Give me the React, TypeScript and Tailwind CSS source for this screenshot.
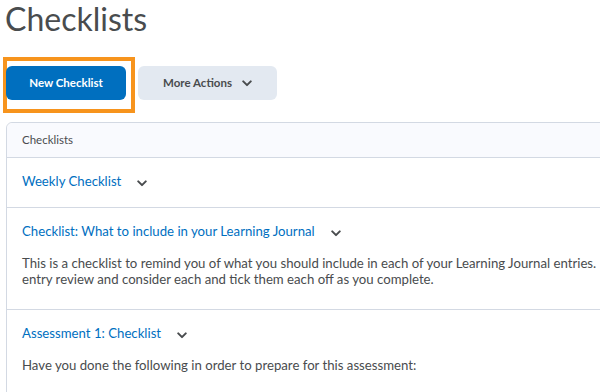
import React from 'react';

function Chevron({ className = '' }: { className?: string }) {
  return (
    <svg viewBox="0 0 12 8" className={className} aria-hidden="true">
      <path d="M1.5 1.5 L6 6 L10.5 1.5" fill="none" stroke="currentColor" strokeWidth="2.4" strokeLinecap="round" strokeLinejoin="round" />
    </svg>
  );
}

type Item = { title: string; lines: string[] };

const ITEMS: Item[] = [
  { title: 'Weekly Checklist', lines: [] },
  {
    title: 'Checklist: What to include in your Learning Journal',
    lines: [
      'This is a checklist to remind you of what you should include in each of your Learning Journal entries.',
      'entry review and consider each and tick them each off as you complete.',
    ],
  },
  {
    title: 'Assessment 1: Checklist',
    lines: ['Have you done the following in order to prepare for this assessment:'],
  },
];

export default function App() {
  return (
    <div className="relative w-[600px] h-[392px] overflow-hidden bg-white font-['Lato','Noto_Sans',sans-serif] text-[#494c4e]">
      <h1 className="pl-[5px] text-[32px] leading-[38px] font-normal text-[#494c4e]">Checklists</h1>

      <div className="relative flex gap-3 pl-[6px] mt-[28px]">
        <div className="absolute left-[3px] top-[-9px] w-[132px] h-[56px] border-4 border-[#f7941d]" />
        <button
          type="button"
          className="relative h-[34px] w-[120px] rounded-md bg-[#006fbf] text-white text-[11.5px] font-bold"
        >
          New Checklist
        </button>
        <button
          type="button"
          className="h-[34px] w-[139px] rounded-md bg-[#e3e9f1] text-[#494c4e] text-[11.5px] font-bold flex items-center justify-center gap-[10px]"
        >
          More Actions
          <Chevron className="w-[10px] h-[7px] text-[#494c4e]" />
        </button>
      </div>

      <div className="ml-[6px] mt-[22px] w-[760px] border border-[#d3d9e3] rounded-tl-md">
        <div className="h-[34px] flex items-center pl-[15px] bg-[#f9fafe] text-[11.5px] text-[#494c4e] rounded-tl-md">
          Checklists
        </div>
        {ITEMS.map((item) => (
          <div key={item.title} className="border-t border-[#d3d9e3] pl-[15px] pt-[14px] pb-[15px]">
            <div className="flex items-center gap-[16px] h-[20px]">
              <span className="text-[13.2px] text-[#006fbf]">{item.title}</span>
              <Chevron className="w-[10px] h-[7px] text-[#494c4e] mt-[2px]" />
            </div>
            {item.lines.length > 0 && (
              <div className="mt-[13px] mb-[7px] text-[13.2px] leading-[16px] text-[#494c4e]">
                {item.lines.map((line) => (
                  <div key={line} className="whitespace-nowrap">
                    {line}
                  </div>
                ))}
              </div>
            )}
          </div>
        ))}
      </div>
    </div>
  );
}
